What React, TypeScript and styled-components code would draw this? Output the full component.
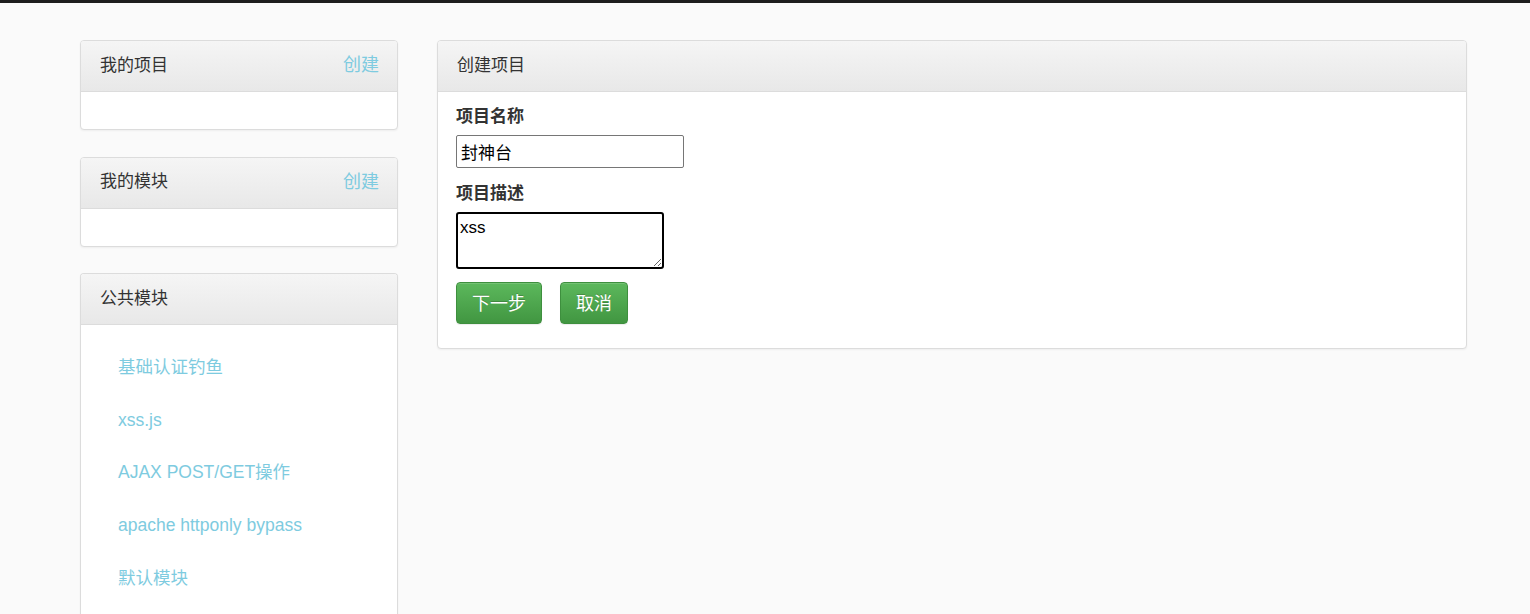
import React, { useEffect, useRef } from "react";
import styled, { createGlobalStyle } from "styled-components";

const GlobalStyle = createGlobalStyle`
  html, body {
    margin: 0;
    padding: 0;
    background: #fafafa;
    font-family: "Liberation Sans", "Noto Sans CJK SC", sans-serif;
    color: #333;
  }
`;

const publicModules = [
  "基础认证钓鱼",
  "xss.js",
  "AJAX POST/GET操作",
  "apache httponly bypass",
  "默认模块",
];

export default function App() {
  const descRef = useRef<HTMLTextAreaElement>(null);

  useEffect(() => {
    const el = descRef.current;
    if (el) {
      el.focus();
      el.setSelectionRange(3, 3);
    }
  }, []);

  return (
    <>
      <GlobalStyle />
      <TopBar />
      <PageWrapper>
        <Sidebar>
          <Panel>
            <PanelHeading>
              <PanelTitle>我的项目</PanelTitle>
              <HeadingLink href="#">创建</HeadingLink>
            </PanelHeading>
            <EmptyBody />
          </Panel>
          <Panel>
            <PanelHeading>
              <PanelTitle>我的模块</PanelTitle>
              <HeadingLink href="#">创建</HeadingLink>
            </PanelHeading>
            <EmptyBody />
          </Panel>
          <Panel $open>
            <PanelHeading>
              <PanelTitle>公共模块</PanelTitle>
            </PanelHeading>
            <ModuleList>
              {publicModules.map((name) => (
                <ModuleItem key={name}>
                  <ModuleLink href="#">{name}</ModuleLink>
                </ModuleItem>
              ))}
            </ModuleList>
          </Panel>
        </Sidebar>

        <Main>
          <Panel>
            <PanelHeading>
              <PanelTitle>创建项目</PanelTitle>
            </PanelHeading>
            <FormBody>
              <FieldLabel>项目名称</FieldLabel>
              <TextInput type="text" defaultValue="封神台" />
              <FieldLabel $spaced>项目描述</FieldLabel>
              <TextArea ref={descRef} defaultValue="xss" />
              <ButtonRow>
                <SuccessButton type="button">下一步</SuccessButton>
                <SuccessButton type="button">取消</SuccessButton>
              </ButtonRow>
            </FormBody>
          </Panel>
        </Main>
      </PageWrapper>
    </>
  );
}

const TopBar = styled.div`
  height: 3px;
  background: #1e1e1e;
`;

const PageWrapper = styled.div`
  display: flex;
  align-items: flex-start;
  gap: 39px;
  padding: 37px 0 0 80px;
`;

const Sidebar = styled.aside`
  width: 318px;
  display: flex;
  flex-direction: column;
  gap: 26.5px;
`;

const Main = styled.main`
  width: 1030px;
`;

const Panel = styled.section<{ $open?: boolean }>`
  background: #fff;
  border: 1px solid #dcdcdc;
  border-radius: 4px;
  box-shadow: 0 1px 2px rgba(0, 0, 0, 0.05);
  overflow: hidden;
  ${(p) => p.$open && "border-bottom: none; border-bottom-left-radius: 0; border-bottom-right-radius: 0;"}
`;

const PanelHeading = styled.header`
  box-sizing: border-box;
  height: 51px;
  display: flex;
  align-items: center;
  justify-content: space-between;
  padding: 0 18px 6px 19px;
  background: linear-gradient(to bottom, #f5f5f5 0%, #e8e8e8 100%);
  border-bottom: 1px solid #dcdcdc;
`;

const PanelTitle = styled.h3`
  margin: 0;
  font-size: 17px;
  font-weight: normal;
  color: #333;
`;

const HeadingLink = styled.a`
  font-size: 18px;
  color: #7ecbe0;
  text-decoration: none;
`;

const EmptyBody = styled.div`
  height: 37px;
`;

const ModuleList = styled.ul`
  list-style: none;
  margin: 0;
  padding: 16px 0 20px 37px;
`;

const ModuleItem = styled.li`
  height: 52.7px;
  line-height: 52px;
`;

const ModuleLink = styled.a`
  font-size: 17.5px;
  color: #7ecbe0;
  text-decoration: none;
`;

const FormBody = styled.div`
  display: flex;
  flex-direction: column;
  align-items: flex-start;
  padding: 13px 18px 24px;
`;

const FieldLabel = styled.label<{ $spaced?: boolean }>`
  font-size: 17px;
  font-weight: bold;
  line-height: 24px;
  color: #333;
  margin-top: ${(p) => (p.$spaced ? "14px" : "0")};
  margin-bottom: 6px;
`;

const TextInput = styled.input`
  box-sizing: border-box;
  width: 228px;
  height: 33px;
  padding: 0 4px;
  border: 1px solid #767676;
  border-radius: 2px;
  font-family: "Liberation Sans", "Noto Sans CJK SC", sans-serif;
  font-size: 17px;
  color: #000;
  background: #fff;
`;

const TextArea = styled.textarea`
  box-sizing: border-box;
  width: 208px;
  height: 57px;
  padding: 3px 2px 2px;
  border: 2px solid #000;
  border-radius: 3px;
  outline: none;
  font-family: "Liberation Sans", "Noto Sans CJK SC", sans-serif;
  font-size: 17px;
  line-height: 22px;
  color: #000;
  background: #fff;
  caret-color: #000;
`;

const ButtonRow = styled.div`
  display: flex;
  gap: 18px;
  margin-top: 13px;
`;

const SuccessButton = styled.button`
  height: 42px;
  padding: 0 15px 3px;
  font-family: "Liberation Sans", "Noto Sans CJK SC", sans-serif;
  font-size: 18px;
  color: #fff;
  background: linear-gradient(to bottom, #5cb85c 0%, #419641 100%);
  border: 1px solid #3e8f3e;
  border-radius: 4px;
  box-shadow: inset 0 1px 0 rgba(255, 255, 255, 0.15), 0 1px 1px rgba(0, 0, 0, 0.075);
  text-shadow: 0 -1px 0 rgba(0, 0, 0, 0.2);
  cursor: pointer;
`;
